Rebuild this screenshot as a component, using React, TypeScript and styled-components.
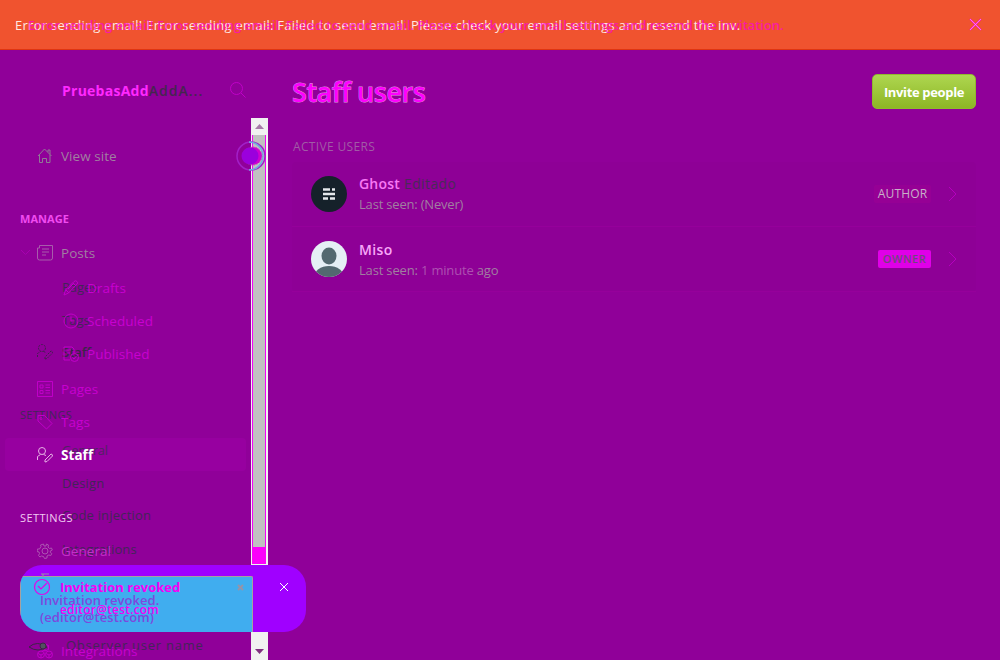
import React from 'react';
import styled, { createGlobalStyle } from 'styled-components';

const Global = createGlobalStyle`
  * { box-sizing: border-box; }
  body { margin: 0; background: #900099; font-family: "Open Sans", "Noto Sans", sans-serif; overflow: hidden; }
`;
const Screen = styled.div`
  position: relative; width: 1000px; height: 660px; display: flex; flex-direction: column; overflow: hidden;
`;
const Banner = styled.header`
  position: relative; height: 50px; flex: none; background: #f0532f; border-bottom: 1px solid #df3512;
  display: flex; align-items: center; justify-content: flex-end; padding-right: 18px;
`;
const Label = styled.span<{ $c: string; $s?: number; $w?: number; $ls?: number }>`
  color: ${p => p.$c}; font-size: ${p => p.$s ?? 13}px; font-weight: ${p => p.$w ?? 400};
  letter-spacing: ${p => p.$ls ?? 0}px; line-height: 18px; white-space: nowrap;
`;
const NavLabel = styled(Label)`font-size: 13.5px; letter-spacing: .05px;`;
const Overlay = styled(Label)<{ $x: number; $y: number }>`
  position: absolute; left: ${p => p.$x}px; top: ${p => p.$y - 9}px;
`;
const Body = styled.div`display: flex; flex: 1; min-height: 0;`;
const Sidebar = styled.aside`position: relative; width: 251px; flex: none; display: flex; flex-direction: column;`;
const SiteHeader = styled.div`height: 89px; flex: none; display: flex; align-items: flex-start; justify-content: space-between; padding: 32px 5px 0 62px;`;
const SiteName = styled.div`display: flex;`;
const NavRow = styled.div<{ $gap?: number; $sub?: boolean; $active?: boolean }>`
  height: 33px; flex: none; margin: ${p => p.$gap ?? 0}px 5px 0; padding-left: ${p => (p.$sub ? 58 : 32)}px;
  display: flex; align-items: center; gap: 8px; border-radius: 4px;
  background: ${p => (p.$active ? 'rgba(255, 0, 255, .07)' : 'transparent')};
`;
const SectionTitle = styled.div<{ $gap: number }>`height: 18px; flex: none; margin-top: ${p => p.$gap}px; padding-left: 20px; display: flex; align-items: center;`;
const Track = styled.div`width: 17px; flex: none; margin-top: 68px; background: #f1f1f1; display: flex; flex-direction: column; padding-left: 1px;`;
const Arrow = styled.div`height: 17px; display: flex; align-items: center; padding-left: 3px;`;
const Thumb = styled.div`width: 14px; height: 412px; background: #c1c1c1; border: solid #f500f8; border-width: 0 1px;`;
const ThumbEnd = styled.div`width: 14px; height: 17px; background: #fb00fb;`;
const Spacer = styled.div`flex: 1;`;
const Main = styled.main`flex: 1; padding: 24px 24px 0; display: flex; flex-direction: column;`;
const TitleBar = styled.div`display: flex; height: 35px; align-items: center; justify-content: space-between;`;
const Title = styled.h1`margin: 0; font-size: 27px; font-weight: 600; color: #ff00ff; letter-spacing: -.45px; line-height: 36px; -webkit-text-stroke: .8px #d79ad8; paint-order: stroke;`;
const Invite = styled.button`
  width: 104px; height: 35px; padding: 0; border: 1px solid #91b92d; border-radius: 5px; color: #fff;
  background: linear-gradient(#aed650, #8db625); font: 700 13px "Open Sans", sans-serif; letter-spacing: -.35px;
`;
const Caption = styled.div`margin-top: 28px; height: 19px; display: flex; align-items: center; padding-left: 1px;`;
const List = styled.section`margin-top: 6px; border-radius: 4px; background: #8e0096;`;
const User = styled.div`height: 65px; display: flex; align-items: center; padding: 0 18px 0 19px; border-bottom: 1px solid #96009b;`;
const Info = styled.div<{ $drop?: number }>`flex: 1; display: flex; flex-direction: column; gap: 2px; padding: ${p => p.$drop ?? 0}px 0 0 12px;`;
const NameLine = styled.div`display: flex; gap: 4px; height: 18px;`;
const Badge = styled.div<{ $owner?: boolean }>`
  width: ${p => (p.$owner ? 53 : 57)}px; height: 18px; border-radius: 2px; display: flex; align-items: center; justify-content: center;
  background: ${p => (p.$owner ? '#e000e8' : '#960095')}; margin-right: 17px;
`;
const Toast = styled.div`position: absolute; left: 20px; top: 565px; width: 286px; height: 67px; border-radius: 22px; background: #a000ff; overflow: hidden; display: flex; align-items: flex-end;`;
const ToastInner = styled.div`width: 233px; height: 56px; background: #40adef; border: 1px solid #a6a0a0; border-bottom: 0; border-radius: 2px 2px 0 0;`;
const Floating = styled.svg<{ $x: number; $y: number }>`position: absolute; left: ${p => p.$x}px; top: ${p => p.$y}px; overflow: visible;`;

const shapes: Record<string, React.ReactNode> = {
  home: <path d="M1 8 7.500 1 14.500 8M2.500 6.500V14.500h3V10.500h4v4h3.500V6.500M11 4V2h2v4" />,
  posts: <path d="M2.500.5h13V13q0 2-2 2H2.500Q.5 15 .5 13V3h2V.5M5 4h7M5 7h7M5 10h4" />,
  pencil: <path d="m1 15 1.5-5L11 1.500Q12.500 0 14 1.500T14 4L5.500 13 1 15ZM10 3l3 3M3 10l3 3M5 9l5-5" />,
  clock: <><circle cx="8" cy="8" r="7" /><path d="M8 3.500V8h3.500" /></>,
  published: <><path d="M7 14H1V1h8l2 2v4M3.500 4H8M3.500 7H7" /><circle cx="11.500" cy="11.500" r="4" /><path d="m9.500 11.500 1.500 1.500 2.500-3" /></>,
  pages: <path d="M.5.5h15v15H.5zM3 4h3v3H3zM3 9.500h3v3H3zM8.500 4H13M8.500 6.500H13M8.500 9.500H13M8.500 12H13" />,
  tag: <><path d="M1 1.500h6.500L15 9.500 9.500 15 1 7z" /><circle cx="4" cy="4.500" r="1" /></>,
  staff: <><circle cx="5" cy="4" r="3.500" /><path d="M.5 13V9.500L3.500 7.500M6.500 7.500 9 8.500M8 15v-2l6-6q1.500 0 1.500 2L10 14.500z" /></>,
  gear: <><circle cx="8" cy="8" r="3" /><path d="m6.500 1 .5 2 2 0 .5-2 2 1-.5 2 1.500 1.500 2-.5.8 2-2 1 0 1.500 1.500 1-1 2-2-.5L10 13l0 2-2.500.500-1-2-2-.500-1.500 1-1.500-1.500 1-2-.500-1.500-2-.500.500-2.500 2 0L4 3.500l-.500-1.500z" /></>,
  cubes: <><path d="m8 1 3.500 1.500v4L8 8 4.500 6.500v-4zM4.500 2.500 8 4l3.500-1.500M8 4v4" /><circle cx="4" cy="11.500" r="3.500" /><circle cx="12" cy="11.500" r="3.500" /><path d="M1 10.500 4 12l3-1.500M9 10.500l3 1.500 3-1.500M4 12v3M12 12v3" /></>,
  search: <><circle cx="6.500" cy="6.500" r="6" /><path d="m11 11 4.500 4.500" /></>,
};
const Icon = ({ name, c = '#c000c8' }: { name: string; c?: string }) => (
  <svg width="16" height="16" viewBox="0 0 16 16" fill="none" stroke={c} strokeWidth="1">{shapes[name]}</svg>
);
const Chevron = () => <svg width="10" height="14" fill="none" stroke="#b600bf"><path d="m1 0 7 7-7 7" /></svg>;

const ghosts: [string, number, number, number][] = [
  ['Pages', 62, 287, 0], ['Tags', 62, 320, 0], ['General', 62, 450, -.3], ['Design', 62, 483, .2],
  ['Code injection', 62, 515, .2], ['Integrations', 62, 549, .15],
];

export default function App() {
  return (
    <Screen>
      <Global />
      <Banner>
        <Overlay $x={15} $y={25} $c="#ffe9e2" $s={13} $ls={.275}>Error sending email! Error sending email: Failed to send email. Please check your email settings and resend the inv.</Overlay>
        <Overlay $x={28} $y={25} $c="#ff00dcb0" $w={600} $s={13} $ls={-.035}>Error sending email! Error sending email: Failed to send email. Please check your email settings and resend the invitation.</Overlay>
        <svg width="13" height="13" stroke="#ff00e6" strokeWidth="1.5"><path d="m1 1 11 11M12 1 1 12" /><path d="m1 1 11 11M12 1 1 12" stroke="#ffc0ee" strokeWidth=".6" /></svg>
      </Banner>

      {ghosts.map(([text, x, y, ls]) => <Overlay key={text} $c="#432558" $x={x} $y={y} $ls={ls}>{text}</Overlay>)}
      <Overlay $c="#3b2548" $x={62} $y={352} $w={600}>Staff</Overlay>
      <Overlay $c="#432558" $x={20} $y={415} $s={11} $ls={.3}>SETTINGS</Overlay>
      <Overlay $c="#432558" $x={66} $y={645} $ls={.75}>Observer user name</Overlay>
      <Floating $x={37} $y={344} width="16" height="16" fill="none" stroke="#42204f" strokeDasharray="2 1">{shapes.staff}</Floating>

      <Body>
        <Sidebar>
          <SiteHeader>
            <SiteName><Label $c="#ff28ff" $w={700} $s={14} $ls={.25}>PruebasAdd</Label><Label $c="#44264f" $w={600} $s={14} $ls={1}>AddA...</Label></SiteName>
            <Icon name="search" />
          </SiteHeader>
          <NavRow><Icon name="home" c="#907995" /><NavLabel $c="#a07fa0">View site</NavLabel></NavRow>
          <SectionTitle $gap={38}><Label $c="#f04bf0" $s={11} $w={700} $ls={.05}>MANAGE</Label></SectionTitle>
          <NavRow $gap={8}><Icon name="posts" c="#a75cab" /><NavLabel $c="#a07fa0">Posts</NavLabel></NavRow>
          <NavRow $sub $gap={2}><Icon name="pencil" /><NavLabel $c="#c800d0">Drafts</NavLabel></NavRow>
          <NavRow $sub><Icon name="clock" /><NavLabel $c="#c800d0">Scheduled</NavLabel></NavRow>
          <NavRow $sub><Icon name="published" /><NavLabel $c="#c800d0">Published</NavLabel></NavRow>
          <NavRow $gap={2}><Icon name="pages" /><NavLabel $c="#c800d0">Pages</NavLabel></NavRow>
          <NavRow><Icon name="tag" /><NavLabel $c="#c800d0">Tags</NavLabel></NavRow>
          <NavRow $active><Icon name="staff" c="#e6b1e5" /><NavLabel $c="#fff" $w={700}>Staff</NavLabel></NavRow>
          <SectionTitle $gap={38}><Label $c="#f1c9f2" $s={11} $ls={.4}>SETTINGS</Label></SectionTitle>
          <NavRow $gap={7}><Icon name="gear" c="#ac54b1" /><NavLabel $c="#c230c8">General</NavLabel></NavRow>
          <NavRow $gap={67}><Icon name="cubes" /><NavLabel $c="#c800d0">Integrations</NavLabel></NavRow>
        </Sidebar>
        <Track>
          <Arrow><svg width="9" height="5"><path d="M0 5 4.500 0 9 5z" fill="#a77ba7" /></svg></Arrow>
          <Thumb /><ThumbEnd /><Spacer />
          <Arrow><svg width="9" height="5"><path d="M0 0h9L4.500 5z" fill="#803080" /></svg></Arrow>
        </Track>
        <Main>
          <TitleBar><Title>Staff users</Title><Invite>Invite people</Invite></TitleBar>
          <Caption><Label $c="#a05ca5" $s={12} $ls={.35}>ACTIVE USERS</Label></Caption>
          <List>
            <User>
              <svg width="36" height="36"><circle cx="18" cy="18" r="18" fill="#15212a" /><path d="M12 13.500h7m2 0h3M12 18h12M12 22.500h5m2 0h5" stroke="#e4e8eb" strokeWidth="2.500" /></svg>
              <Info><NameLine><Label $c="#f878f5" $w={600} $s={14} $ls={.2}>Ghost</Label><Label $c="#4a2a58" $s={14} $ls={.4}>Editado</Label></NameLine><Label $c="#a07fa0" $ls={-.19}>Last seen: (Never)</Label></Info>
              <Badge><Label $c="#c8b0c8" $s={12} $ls={.15}>AUTHOR</Label></Badge><Chevron />
            </User>
            <User>
              <svg width="36" height="36"><defs><clipPath id="avatar"><circle cx="18" cy="18" r="18" /></clipPath></defs><g clipPath="url(#avatar)"><path fill="#e5eff5" d="M0 0h36v36H0z" /><ellipse cx="18" cy="15" rx="7.500" ry="8.500" fill="#536970" /><ellipse cx="18" cy="36" rx="15" ry="11" fill="#536970" /></g></svg>
              <Info $drop={2}><Label $c="#f8a8f8" $w={600} $s={14} $ls={.4}>Miso</Label><Label $c="#a07fa0" $ls={-.17}>Last seen: <Label $c="#ad50b1" $ls={-.17}>1 minute</Label> ago</Label></Info>
              <Badge $owner><Label $c="#70457c" $s={11} $w={600} $ls={.5}>OWNER</Label></Badge><Chevron />
            </User>
          </List>
        </Main>
      </Body>

      <Floating $x={21} $y={250} width="9" height="6" fill="none" stroke="#a800b0"><path d="m0 0 4.500 4.500L9 0" /></Floating>
      <Floating $x={28} $y={642} width="20" height="10" fill="none" stroke="#3b2645"><path d="M1 5q8-7 18 0-9 6-18 0" /><circle cx="15" cy="4" r="3" fill="#535060" /></Floating>
      <Floating $x={236} $y={141} width="30" height="30" fill="none">
        <circle cx="15" cy="15" r="14" stroke="#a21fc8" strokeWidth="1.500" />
        <path d="M13 1a14 14 0 0 1 0 28" stroke="#70aee0" strokeWidth="1.500" />
        <circle cx="17" cy="15" r="9" fill="#d000d0" stroke="#b05cb0" strokeDasharray="1.500 1.500" />
        <circle cx="14" cy="15" r="8.500" fill="#9b00dd" />
      </Floating>

      <Toast><ToastInner /></Toast>
      <Overlay $c="#7d48dd" $x={40} $y={600} $w={600} $ls={.05}>Invitation revoked.</Overlay>
      <Overlay $c="#7d48dd" $x={40} $y={617} $w={600} $ls={.1}>(editor@test.com)</Overlay>
      <Overlay $c="#f500f5" $x={60} $y={587} $w={700}>Invitation revoked</Overlay>
      <Overlay $c="#f500f5" $x={60} $y={610} $w={600} $s={12} $ls={.2}>editor@test.com</Overlay>
      <Floating $x={34} $y={573} width="17" height="24" fill="none" stroke="#e500eb" strokeWidth="1.200"><path d="M7 1h8M9 1v3" stroke="#9a8ba5" /><circle cx="8" cy="14" r="7.500" /><path d="m4 13 3 3 6-6" /></Floating>
      <Floating $x={237} $y={584} width="7" height="7" stroke="#9694a8" strokeWidth="2"><path d="m1 1 5 5M6 1 1 6" /></Floating>
      <Floating $x={280} $y={583} width="8" height="8" stroke="#fff"><path d="m0 0 8 8M8 0 0 8" /></Floating>
    </Screen>
  );
}
